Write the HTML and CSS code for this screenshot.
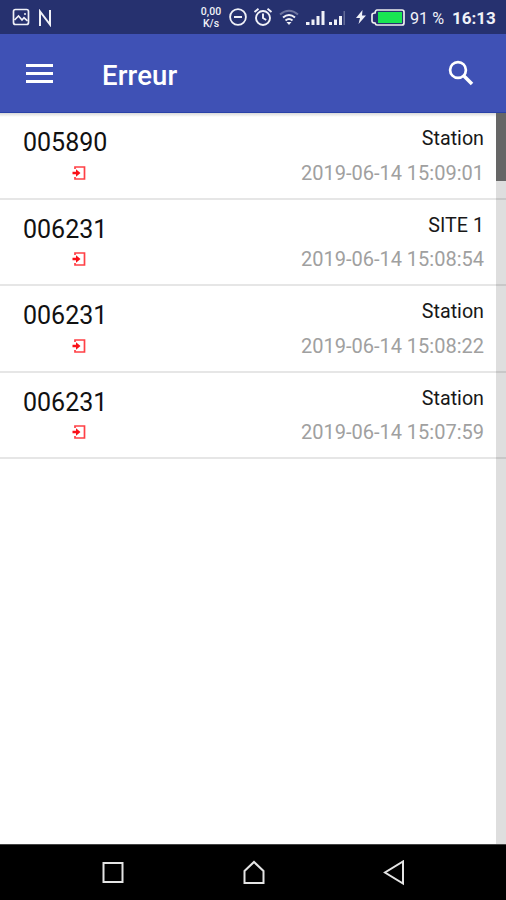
FILE: index.html
```
<!DOCTYPE html>
<html lang="fr">
<head>
<meta charset="utf-8">
<title>Erreur</title>
<link rel="stylesheet" href="styles.css">
</head>
<body>
<div class="screen">
  <header class="status">
    <svg class="picture" width="18" height="18" viewBox="0 0 18 18" fill="none" stroke="currentColor" stroke-width="1.700"><rect x="1.500" y="1.500" width="15" height="15" rx="2"/><path d="M2.500 12l4-4 3.500 4 2-2.200 3.500 3M12 6h2"/></svg>
    <svg class="notif" width="14" height="18" viewBox="0 0 14 18" fill="none" stroke="currentColor" stroke-width="2"><path d="M2 17V2.500l10 13V1"/></svg>
    <div class="speed"><span>0,00</span><span>K/s</span></div>
    <svg class="dnd" width="18" height="18" viewBox="0 0 18 18" fill="none" stroke="currentColor" stroke-width="1.800"><circle cx="9" cy="9" r="7.900"/><path d="M5 9h8" stroke-width="2"/></svg>
    <svg class="alarm" width="20" height="20" viewBox="0 0 20 20" fill="none" stroke="currentColor" stroke-width="1.900"><circle cx="10" cy="11" r="7"/><path d="M1.500 5l4-3.300M18.500 5l-4-3.300M10 6.500V11l3.200 2"/></svg>
    <svg class="wifi" width="20" height="17" viewBox="0 0 20 17" fill="none" stroke="currentColor" stroke-width="2"><path d="M1 5.500Q10-2 19 5.500" opacity=".35"/><path d="M4 8.500q6-5 12 0M6.500 11.500q3.500-3 7 0"/><path d="M7.500 13h5L10 16z" fill="currentColor" stroke="none"/></svg>
    <svg class="signal" width="39" height="16" viewBox="0 0 39 16" fill="currentColor"><path d="M0 12h3.500v3H0zM5.500 9.500h3V15h-3zM10.500 6h3v9h-3zM15.500 1h3v14h-3zM23 12h3v3h-3zM28 9.500h3V15h-3zM33 6h3v9h-3z"/><path d="M37.500 1h1.500v14h-1.500z" opacity=".3"/></svg>
    <svg class="bolt" width="12" height="14" viewBox="0 0 12 14" fill="currentColor"><path d="M7.500 0L1 8h4l-1.500 6L11 5.500H7z"/></svg>
    <svg class="battery" width="34" height="17" viewBox="0 0 34 17"><path d="M6 1h25q2 0 2 2v11q0 2-2 2H6q-1.500 0-2-2-3 0-3-2V6q0-2 3-2 .5-3 2-3z" fill="#26316f" stroke="#eee" stroke-width="1.700"/><path d="M7 3h24v11H7z" fill="#18e552"/></svg>
    <span class="level">91 %</span>
    <span class="clock">16:13</span>
  </header>
  <nav class="toolbar">
    <svg class="menu" width="27" height="20" viewBox="0 0 27 20" fill="currentColor"><path d="M0 0h27v3H0zM0 8h27v3H0zM0 16h27v3H0z"/></svg>
    <h1 class="title">Erreur</h1>
    <svg class="search" width="26" height="26" viewBox="0 0 26 26" fill="none" stroke="currentColor"><circle cx="10" cy="10" r="7.900" stroke-width="2.700"/><path d="M15.500 15.500l8.500 8.500" stroke-width="3.500"/></svg>
  </nav>
  <main class="content">
    <ul class="list">
      <li class="row"><div class="entry"><span class="code">005890</span><svg class="enter" width="15" height="16" viewBox="0 0 15 16"><path d="M3 4V2h9.500v12H3v-2" fill="none" stroke="#ff4046" stroke-width="1.700"/><path d="M.5 6.800h3.500V4.200L8.500 8 4 11.800V9.200H.5z" fill="#fa1018"/></svg></div><div class="details"><span class="place">Station</span><time class="date">2019-06-14 15:09:01</time></div></li>
      <li class="row"><div class="entry"><span class="code">006231</span><svg class="enter" width="15" height="16" viewBox="0 0 15 16"><path d="M3 4V2h9.500v12H3v-2" fill="none" stroke="#ff4046" stroke-width="1.700"/><path d="M.5 6.800h3.500V4.200L8.500 8 4 11.800V9.200H.5z" fill="#fa1018"/></svg></div><div class="details"><span class="place">SITE 1</span><time class="date">2019-06-14 15:08:54</time></div></li>
      <li class="row"><div class="entry"><span class="code">006231</span><svg class="enter" width="15" height="16" viewBox="0 0 15 16"><path d="M3 4V2h9.500v12H3v-2" fill="none" stroke="#ff4046" stroke-width="1.700"/><path d="M.5 6.800h3.500V4.200L8.500 8 4 11.800V9.200H.5z" fill="#fa1018"/></svg></div><div class="details"><span class="place">Station</span><time class="date">2019-06-14 15:08:22</time></div></li>
      <li class="row"><div class="entry"><span class="code">006231</span><svg class="enter" width="15" height="16" viewBox="0 0 15 16"><path d="M3 4V2h9.500v12H3v-2" fill="none" stroke="#ff4046" stroke-width="1.700"/><path d="M.5 6.800h3.500V4.200L8.500 8 4 11.800V9.200H.5z" fill="#fa1018"/></svg></div><div class="details"><span class="place">Station</span><time class="date">2019-06-14 15:07:59</time></div></li>
    </ul>
    <div class="track"><div class="thumb"></div></div>
  </main>
  <footer class="keys">
    <svg width="24" height="26" viewBox="0 0 24 26"><path d="M2.500 3h19v19h-19z"/></svg>
    <svg width="24" height="26" viewBox="0 0 24 26"><path d="M2.500 23V11L12 2l9.500 9v12z"/></svg>
    <svg width="24" height="26" viewBox="0 0 24 26"><path d="M21 1.500v22L3 12.500z"/></svg>
  </footer>
</div>
</body>
</html>
```
FILE: styles.css
```
* { box-sizing: border-box; }
body { margin: 0; font-family: Roboto, "Liberation Sans", sans-serif; }
svg { display: block; flex: none; }
.screen { width: 506px; height: 900px; display: flex; flex-direction: column; background: #fff; overflow: hidden; }

.status { height: 34px; flex: none; display: flex; align-items: center; background: #26316f; color: #f0f1f8; white-space: nowrap; }
.picture { margin-left: 12px; }
.notif { margin-left: 8px; margin-top: 2px; }
.speed { width: 22px; margin: 1px 0 0 148px; display: flex; flex-direction: column; align-items: center; font-size: 10.5px; line-height: 12px; font-weight: 500; }
.dnd { margin-left: 7px; }
.alarm { margin-left: 6px; }
.wifi { margin-left: 6px; }
.signal { margin-left: 7px; margin-top: 2px; }
.bolt { margin-left: 10px; }
.battery { margin-left: 4px; }
.level { width: 36px; margin: 3px 0 0 5px; font-size: 16.2px; line-height: 31px; }
.clock { margin: 2px 0 0 6px; font-size: 17px; line-height: 32px; font-weight: 700; }

.toolbar { height: 79px; flex: none; display: flex; align-items: center; padding: 0 32px 0 26px; background: #3f51b5; border-bottom: 1px solid #2941a8; color: #fff; }
.menu { margin-top: 2px; }
.title { margin: 5px 0 0 49px; font-size: 27.5px; line-height: 32px; font-weight: 500; letter-spacing: .15px; }
.search { margin-left: auto; }

.content { flex: 1; position: relative; background: linear-gradient(#d8d8d8, #fff 4px); }
.list { margin: 0; padding: 0; list-style: none; }
.row { height: 86.5px; display: flex; justify-content: space-between; padding: 0 22px 0 23px; border-bottom: 2px solid #e6e6e6; }
.entry { width: 90px; padding-top: 15.4px; }
.code { display: block; font-size: 25px; line-height: 30px; color: #111; }
.enter { margin: 6.6px 0 0 49px; }
.details { display: flex; flex-direction: column; align-items: flex-end; padding-top: 14.4px; }
.place { font-size: 19.7px; line-height: 24px; color: #181818; }
.date { margin-top: 9.6px; font-size: 20px; line-height: 24px; color: #a0a0a0; }
.track { position: absolute; top: 0; right: 0; bottom: 0; width: 10px; background: rgba(0, 0, 0, .13); }
.thumb { height: 68px; background: #666; }

.keys { height: 56px; flex: none; display: flex; justify-content: space-between; align-items: center; padding: 0 100px 0 101px; background: #000; border-top: 1px solid #444; }
.keys path { fill: none; stroke: #e4e4e4; stroke-width: 2; }
```
